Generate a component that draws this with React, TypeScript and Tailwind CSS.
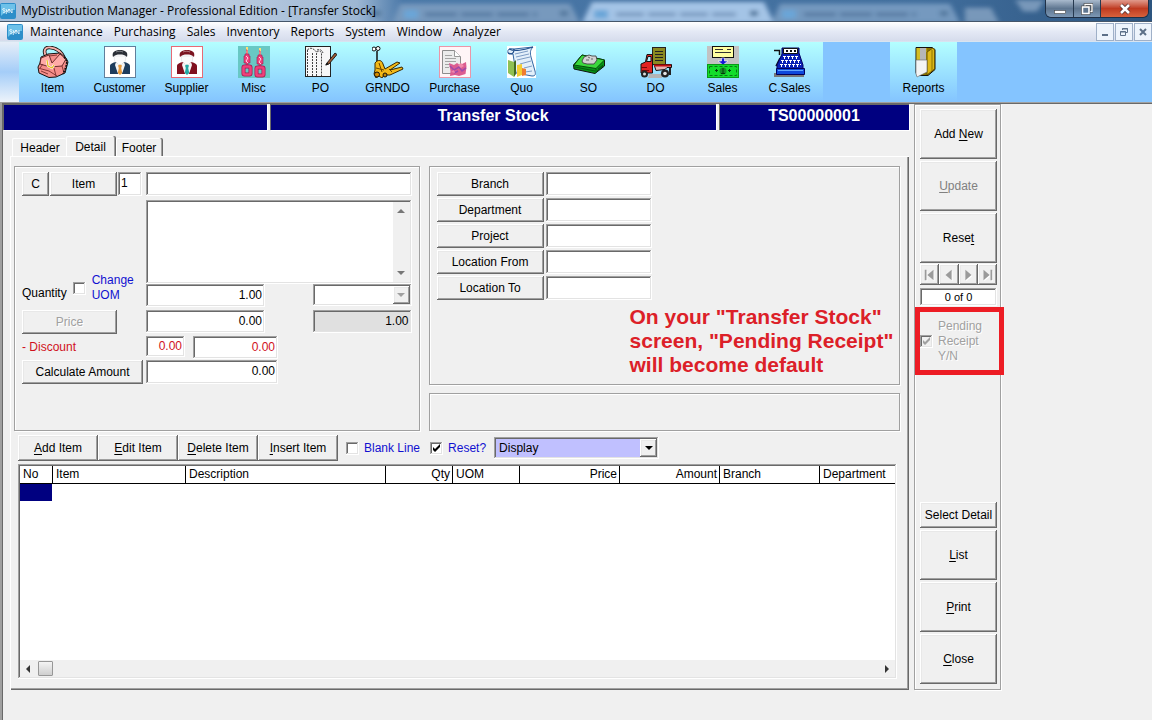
import { useState } from "react";
import type { ReactNode } from "react";
import clsx from "clsx";

const raised =
  "bg-[#f0f0f0] shadow-[inset_-1px_-1px_#696969,inset_1px_1px_#ffffff,inset_-2px_-2px_#a0a0a0,inset_2px_2px_#e8e8e8]";
const sunken =
  "shadow-[inset_-1px_-1px_#ffffff,inset_1px_1px_#a0a0a0,inset_-2px_-2px_#e3e3e3,inset_2px_2px_#696969]";
const etched = "border border-[#a0a0a0] shadow-[1px_1px_#ffffff,inset_1px_1px_#ffffff]";
const disabledText = "text-[#a0a0a0] [text-shadow:1px_1px_#ffffff]";

type ToolItem = { label: string; icon: ReactNode };

const menus = ["Maintenance", "Purchasing", "Sales", "Inventory", "Reports", "System", "Window", "Analyzer"];

function PersonIcon({ frame, hair, suit, tie }: { frame: string; hair: string; suit: string; tie: string }) {
  return (
    <>
      <rect x="0.5" y="0.5" width="31" height="31" fill="#fff" stroke={frame} />
      <path d="M10.500 10h11c1 6-2 9-5.500 9s-6.500-3-5.500-9Z" fill="#fbfbfb" stroke="#d8d8de" strokeWidth="0.6" />
      <path d="M9 11C7.500 6 11 4 16 4s8.500 2 7 7c-2-2-4-2.500-7-2.500S11 9 9 11Z" fill={hair} />
      <path d="M12 6c2-1 5-1 7 0" stroke="#fff" strokeOpacity="0.4" fill="none" />
      <path d="M6 28V20c0-2 3-3.500 6-4l4 5 4-5c3 .5 6 2 6 4v8Z" fill={suit} />
      <path d="m12 16 4 4 4-4 1 3-3 9h-4l-3-9Z" fill="#f4f4f4" />
      <path d="m9 18 5 10H8ZM23 18l-5 10h6Z" fill={suit} />
      <path d="m14 19.500 2-1 2 1-.8 2.500 1 5-2.200 2-2.200-2 1-5Z" fill={tie} />
    </>
  );
}

function Candle({ x }: { x: number }) {
  return (
    <>
      <path d={`M${x + 5} 1v9`} stroke="#ffe070" strokeWidth="2" />
      <path d={`M${x + 4} 4h1v4h-1`} stroke="#d0308a" fill="none" />
      <path d={`M${x + 3} 8h4v2h1v7h-2v3h-2v-3h-2v-7h1Z`} fill="#f0407a" stroke="#a01850" strokeWidth="0.6" />
      <path d={`M${x + 4} 10l2 2-2 3 2 2`} stroke="#ffd0e0" fill="none" />
      <rect x={x + 1.5} y="20.500" width="7" height="8" rx="1" fill="none" stroke="#a01850" strokeWidth="4" />
      <rect x={x + 1.5} y="20.500" width="7" height="8" rx="1" fill="none" stroke="#f0407a" strokeWidth="2.600" />
    </>
  );
}

const tools: ToolItem[] = [
  {
    label: "Item",
    icon: (
      <>
        <path d="M9 10C6 5 8 1 13 1.500c6 .5 11 4 14 10" fill="none" stroke="#111" strokeWidth="3.600" />
        <path d="M9 10C6 5 8 1 13 1.500c6 .5 11 4 14 10" fill="none" stroke="#f8b0aa" strokeWidth="1.800" />
        <path d="m4 11 7-3 12-1 6 5 2 4-3 11-9 4-7 0.500L2 27l-1-6 2-4Z" fill="#f58e8a" stroke="#111" />
        <path d="m4 12 8-3 3 8 8-9 6 5-4 7-12 1L3 18Z" fill="#ffaaa6" stroke="#5c2020" strokeWidth="0.9" />
        <path d="m1 22 11 3 8 5M17 22l2 8M25 20l2 7M6 18l-3 4M4 25l7 3M12 10l8-1" stroke="#7c2c2c" fill="none" strokeWidth="0.9" />
        <path d="m10 14 1 6 4 2 2-3" stroke="#fff" strokeWidth="2.400" fill="none" />
        <path d="m10 14 1 6 4 2 2-3" stroke="#e8c020" strokeWidth="1.300" fill="none" />
        <path d="m27 11 3 4-1 6-3 7" stroke="#111" fill="none" strokeWidth="1.600" strokeDasharray="2 1" />
      </>
    ),
  },
  { label: "Customer", icon: <PersonIcon frame="#5f7f9c" hair="#2a2e36" suit="#1d3c5c" tie="#e59a3c" /> },
  { label: "Supplier", icon: <PersonIcon frame="#e76a75" hair="#7b1420" suit="#80101f" tie="#23aaa5" /> },
  {
    label: "Misc",
    icon: (
      <>
        <rect width="32" height="32" fill="#68c8c4" />
        <Candle x={4} />
        <g transform="translate(0 1)">
          <Candle x={17} />
        </g>
      </>
    ),
  },
  {
    label: "PO",
    icon: (
      <>
        <rect x="0.5" y="0.5" width="25" height="30" fill="#f7f7f7" stroke="#222" />
        <path
          d="M2.500 4v26M7.500 7v23M11.500 30V8c0-4 5-4 5 0v22M2.500 4c2-3 6-2 9 2M12 4c3-1 5 0 6 3"
          fill="none"
          stroke="#444"
          strokeDasharray="2 1"
        />
        <path d="m22 17 8-10 2 1.500-8 9.500-3 1Z" fill="#9d5a33" stroke="#111" strokeWidth="0.9" />
        <path d="m20 19.500 2-3 1.500 1.500Z" fill="#111" />
      </>
    ),
  },
  {
    label: "GRNDO",
    icon: (
      <>
        <path d="M5 5v16M5 5v12l3 4" stroke="#111" strokeWidth="1.500" fill="none" />
        <circle cx="2" cy="3" r="2" fill="#fff" stroke="#111" />
        <circle cx="6" cy="2.500" r="2" fill="#fff" stroke="#111" />
        <path
          d="M3 17c3-4 7-3 8 1l2 5 12-7 3 1-10 7 12-3 1 2-13 6-6 0-2 3-3-2-3 2-2-4 1-4Z"
          fill="#f3b918"
          stroke="#3a2800"
        />
        <path d="m7 17 3 9M4 22l8 2M17 23l3 3" stroke="#6a4500" fill="none" />
        <circle cx="5" cy="28.500" r="2.500" fill="#d38b00" stroke="#111" />
        <circle cx="13" cy="29" r="2" fill="#c68600" stroke="#111" />
      </>
    ),
  },
  {
    label: "Purchase",
    icon: (
      <>
        <rect x="0.5" y="0.5" width="31" height="31" fill="#fff5f7" stroke="#eb96a8" />
        <path d="M3.500 4.500h12l6 6v17h-18Z" fill="#ececec" stroke="#8c8c8c" />
        <path d="M15.500 4.500v6h6" fill="#fff" stroke="#999" />
        <path d="M6 9.500h7M6 12.500h11M6 15.500h11M6 18.500h5M6 21.500h4" stroke="#a4a4a4" />
        <path d="m10 17 5 2 3-2 3 2 6-3 .5 5-1 7-6.500 2-4-1-5 1 .5-5Z" fill="#dc5c90" />
        <path d="m11 20 4 4 5-3 3 4 4-3M15 27l4-2" stroke="#a04aa8" strokeWidth="1.600" fill="none" />
        <path d="m19 19 3-2 3 3-3 2ZM12 26l3-2 1 3Z" fill="#f08aac" />
      </>
    ),
  },
  {
    label: "Quo",
    icon: (
      <>
        <rect x="1" width="29" height="32" fill="#fff" />
        <path
          d="M2 7C1 3 4 2 8 3l19-2c-3 3-3 6-2 10l4 14c1 4 0 5-3 5l-16-3L7 8Z"
          fill="#e3effa"
          stroke="#3366a2"
        />
        <path d="M2 7c3 2 6 1 6-4M3 3c6 3 14 1 24-2" stroke="#24508c" strokeWidth="1.200" fill="none" />
        <path d="m9 8 13-3M10 11l13-3M11 14l13-3M14 18l11-3M18 22l8-2M19 26l7-1" stroke="#7d9cc4" fill="none" />
        <path d="m2 14 6 2v15l-6-4Z" fill="#8fc052" />
        <path d="m8 16 2-2v14l-2 3Z" fill="#426b20" />
        <path d="m11 19 5-1v11l-5 2Z" fill="#f4ce32" />
        <path d="m16 22 4 1v6l-4 1Z" fill="#ef7d2e" />
      </>
    ),
  },
  {
    label: "SO",
    icon: (
      <>
        <path d="M0.500 19 9 9l22.500 5v6L22 27.500 1 23Z" fill="#079417" stroke="#111" />
        <path d="M1 19 9 9l22.500 5L23 22.500Z" fill="#3cd83c" stroke="#064b0c" />
        <path d="M23 22.500v4.500M2 21l20 4M25 23l5-4M24 25l6-5" stroke="#055c0e" fill="none" />
        <path d="m9 15 2-4 5-2 3 1 4 0 1 4-3 4-4 0-3 0-4-1Z" fill="#d2d2d2" stroke="#444" strokeWidth="0.9" />
        <path d="M13 14h3M19 12v2M15 11l2 1" stroke="#666" />
      </>
    ),
  },
  {
    label: "DO",
    icon: (
      <>
        <path d="M9 28h13v4H8Z" fill="#b4b4b4" />
        <rect x="12.500" y="1.500" width="13" height="17" fill="#8a8a20" stroke="#222" />
        <path d="M15 5.500h8M15 8.500h8M15 11.500h8M15 14.500h8" stroke="#222" />
        <path d="M14 18.500h17.500v3H27l-2 2-9 1Z" fill="#e9b0b0" stroke="#111" />
        <path d="M14 19.500h17" stroke="#c01010" strokeWidth="2" />
        <path d="M5.500 16 7 8.500h5.500V27H1v-9Z" fill="#e12222" stroke="#111" />
        <path d="m6.500 15.500 1.500-5h3v5Z" fill="#b9f2ff" stroke="#111" />
        <path d="M1 21.500h6M2 24.500h7" stroke="#7a0505" />
        <circle cx="4.500" cy="28" r="3.500" fill="#222" />
        <circle cx="4.500" cy="28" r="1.500" fill="#ddd" />
        <circle cx="25" cy="27.500" r="4" fill="#222" />
        <circle cx="25" cy="27.500" r="1.800" fill="#e4e4e4" />
        <path d="M30 22v7" stroke="#222" strokeWidth="2" />
      </>
    ),
  },
  {
    label: "Sales",
    icon: (
      <>
        <rect width="32" height="32" fill="#c2c2c2" />
        <rect x="5.500" y="0.500" width="21" height="11" fill="#ffffa0" stroke="#111" />
        <path d="M8 3.500h8M20 3.500h4M8 6.500h16" stroke="#333" />
        <path d="M14.500 12h3v3h3.500l-5 4-5-4h3.500Z" fill="#1515d8" stroke="#fff" strokeWidth="0.6" />
        <rect x="0.500" y="18.500" width="31" height="13" fill="#13dd2b" stroke="#0a9a18" />
        <rect x="2.500" y="20.500" width="27" height="9" fill="none" stroke="#087714" strokeDasharray="3 2" />
        <circle cx="16" cy="25" r="3.500" fill="#159025" />
        <path d="M14 27.500h4M16 22v5M9.500 23v3M22.500 23v3M8 24.500h3M21 24.500h3" stroke="#043b0a" />
      </>
    ),
  },
  {
    label: "C.Sales",
    icon: (
      <>
        <path d="M0 27h30v4H0Z" fill="#777" />
        <path d="M0 4.500h5.500V9M6 12l-4 8" fill="none" stroke="#111" strokeWidth="1.500" />
        <path d="M8 2h17v5l4 12v8H3v-8L8 8Z" fill="#0a20b5" stroke="#000060" />
        <path d="M9.500 2.500h14v5h-14Z" fill="#fff" stroke="#111" />
        <path d="M12 5h2M16 5h2M20 5h2" stroke="#111" strokeWidth="2" />
        <path d="M9 10.500h16M7 14.500h19M6 18.500h21" stroke="#fff" strokeDasharray="3 1" />
        <path d="M10 12h15M8 16h18M7 20h20" stroke="#fff" strokeWidth="2" strokeDasharray="1 3" />
        <path d="M2.500 22.500h28v6h-28Z" fill="#0d48dc" stroke="#000060" />
        <path d="M4 24.500h25" stroke="#62a7ff" />
      </>
    ),
  },
];

const reportsTool: ToolItem = {
  label: "Reports",
  icon: (
    <>
      <path d="M8 1.500h16l3 2v20l-7 6-11 0-1-3Z" fill="#8c7400" stroke="#111" />
      <path d="M8.500 2h10v13h-10Z" fill="#d3bd23" />
      <path d="M12 2h6v13h-6Z" fill="#b6b6b6" />
      <path d="m19 6 6-4 1.500 2v19L19 29Z" fill="#ddb817" stroke="#6b5600" />
      <path d="M24 4v21" stroke="#8c7400" />
      <path d="M8 14h11v12l-10 5-1-3Z" fill="#f4f4f4" stroke="#666" strokeWidth="0.6" />
    </>
  ),
};

function AppLogo() {
  return (
    <svg viewBox="0 0 16 16" className="size-4 shrink-0" aria-hidden="true">
      <rect width="16" height="16" rx="2" fill="#2d8ec9" />
      <path d="M1 1h14v6C9 7 5 9 1 13Z" fill="#6dc1e9" />
      <path d="M5 6c-2-1-3 0-2 1l2 1c1 2-1 2-2 1M6 6l1 3 2-3M7 9l-1 2M9 10V6l3 4V6" stroke="#fff" fill="none" strokeWidth="0.8" />
    </svg>
  );
}

function ToolButton({ item }: { item: ToolItem }) {
  return (
    <button type="button" className="flex w-[67px] shrink-0 flex-col items-center bg-linear-to-b from-[#b4ffff] to-[#84c4ff] pt-1 text-center">
      <svg viewBox="0 0 32 32" className="size-8" aria-hidden="true">
        {item.icon}
      </svg>
      <span className="mt-[2px] leading-4">{item.label}</span>
    </button>
  );
}

function TitleBar() {
  return (
    <header className="relative flex h-[22px] items-center overflow-hidden border-b border-[#45566a] bg-[#47729f] font-['Open_Sans',sans-serif]">
      {/* glass: tabs of the window behind shine through */}
      <svg className="absolute inset-0 h-full w-full" viewBox="0 0 1152 22" preserveAspectRatio="none" aria-hidden="true">
        <defs>
          <filter id="glass" x="-5%" y="-50%" width="110%" height="200%">
            <feGaussianBlur stdDeviation="2.5" />
          </filter>
          <linearGradient id="sky" x1="0" x2="1">
            <stop offset="0" stopColor="#a7bfda" />
            <stop offset="0.2" stopColor="#b9cbe0" />
            <stop offset="0.31" stopColor="#9db7d3" />
            <stop offset="0.35" stopColor="#4a78a8" />
            <stop offset="0.8" stopColor="#416e9d" />
            <stop offset="1" stopColor="#2d557f" />
          </linearGradient>
        </defs>
        <rect width="1152" height="22" fill="url(#sky)" />
        <g filter="url(#glass)">
          <path d="M392 24 400 4h170l10 20Z" fill="#7799bd" />
          <path d="M582 24 592 2h172l10 22Z" fill="#a4c4e6" />
          <path d="M772 24 780 4h170l10 20Z" fill="#7599bf" />
          <path d="M965 24V8h26l8 16ZM1015 0h30l-8 12h-14Z" fill="#7898ba" />
          <path d="M425 15h112M804 15h112" stroke="#5b7fa6" strokeWidth="5" strokeDasharray="32 4" />
          <path d="M616 15h120" stroke="#7f9fc4" strokeWidth="5" strokeDasharray="28 4" />
          <path d="M372 14h9M560 14h8M750 14h8M940 14h8" stroke="#557a9f" strokeWidth="6" />
          <path d="M404 15h14M594 15h14M782 15h14" stroke="#6aa6d8" strokeWidth="9" />
        </g>
      </svg>
      <div className="relative flex min-w-0 flex-1 items-center gap-[5px]">
        <AppLogo />
        <h1 className="truncate text-[12px] text-black">MyDistribution Manager - Professional Edition - [Transfer Stock]</h1>
      </div>
      <div className="relative mr-[3px] flex h-[18px] self-start overflow-hidden rounded-b-md border border-t-0 border-[#1f3047]">
        <button type="button" aria-label="Minimize" className="grid w-[28px] place-items-center border-r border-[#26394f] bg-linear-to-b from-[#a9bacd] via-[#5f7690] to-[#7d98b5]">
          <svg viewBox="0 0 12 12" className="size-3" aria-hidden="true">
            <rect x="0.5" y="7.5" width="11" height="3" fill="#fff" stroke="#444" strokeWidth="0.6" />
          </svg>
        </button>
        <button type="button" aria-label="Restore" className="grid w-[27px] place-items-center border-r border-[#26394f] bg-linear-to-b from-[#a9bacd] via-[#5f7690] to-[#7d98b5]">
          <svg viewBox="0 0 12 12" className="size-3" aria-hidden="true">
            <path d="M4 1.500h7v7H4Z" fill="none" stroke="#333" strokeWidth="2.600" />
            <path d="M4 1.500h7v7H4Z" fill="none" stroke="#fff" strokeWidth="1.400" />
            <rect x="1.500" y="4" width="6.500" height="6.500" fill="#5f7690" stroke="#333" strokeWidth="2.600" />
            <rect x="1.500" y="4" width="6.500" height="6.500" fill="#5f7690" stroke="#fff" strokeWidth="1.600" />
          </svg>
        </button>
        <button type="button" aria-label="Close window" className="grid w-[47px] place-items-center bg-linear-to-b from-[#e09a8c] via-[#bf3a20] to-[#d8623c]">
          <svg viewBox="0 0 12 12" className="size-3" aria-hidden="true">
            <path d="m2 2 8 8M10 2l-8 8" stroke="#4a2a2a" strokeWidth="4" />
            <path d="m2 2 8 8M10 2l-8 8" stroke="#fff" strokeWidth="2.600" />
          </svg>
        </button>
      </div>
    </header>
  );
}

function MenuBar() {
  const box = "grid size-[18px] place-items-center border border-[#9fb0c8] bg-[#eef4fc]";
  return (
    <nav className="flex h-[19px] items-center justify-between bg-linear-to-b from-white via-[#e4e9f5] to-[#d6dcec] pl-[7px] font-['Open_Sans',sans-serif]">
      <div className="flex items-center gap-[7px]">
        <AppLogo />
        <ul className="flex gap-[11px] text-[12px] leading-[18px]">
          {menus.map((menu) => (
            <li key={menu}>
              <button type="button">{menu}</button>
            </li>
          ))}
        </ul>
      </div>
      <div className="flex gap-px">
        <button type="button" aria-label="Minimize form" className={box}>
          <svg viewBox="0 0 10 10" className="size-[10px]" aria-hidden="true">
            <path d="M2 8h6" stroke="#5d7088" strokeWidth="2" />
          </svg>
        </button>
        <button type="button" aria-label="Restore form" className={box}>
          <svg viewBox="0 0 10 10" className="size-[10px]" aria-hidden="true">
            <path d="M3.500 3V1.500h5v4H7M3 2h6" stroke="#5d7088" fill="none" />
            <path d="M1.500 4.500h5v4h-5ZM1 5h6" stroke="#5d7088" fill="none" />
          </svg>
        </button>
        <button type="button" aria-label="Close form" className={box}>
          <svg viewBox="0 0 10 10" className="size-[10px]" aria-hidden="true">
            <path d="m2 2 6 6M8 2 2 8" stroke="#5d7088" strokeWidth="2" />
          </svg>
        </button>
      </div>
    </nav>
  );
}

function Toolbar() {
  return (
    <div className="flex h-[61px] overflow-hidden border-t border-[#d8e4f0] bg-[#84c4ff]">
      <div className="w-[19px] shrink-0 bg-linear-to-b from-[#e6eef8] via-[#a4cdf8] to-[#edf3fa]" />
      {tools.map((item) => (
        <ToolButton key={item.label} item={item} />
      ))}
      <div className="w-[67px] shrink-0" />
      <ToolButton item={reportsTool} />
    </div>
  );
}

function Key({ text, letter }: { text: string; letter: string }) {
  const at = text.indexOf(letter);
  return (
    <span>
      {text.slice(0, at)}
      <u className="underline-offset-2">{letter}</u>
      {text.slice(at + 1)}
    </span>
  );
}

function PushButton({ children, className, disabled }: { children: ReactNode; className?: string; disabled?: boolean }) {
  return (
    <button type="button" disabled={disabled} className={clsx("text-center", raised, className)}>
      {children}
    </button>
  );
}

function Field({ label, value = "", className, right }: { label: string; value?: string; className?: string; right?: boolean }) {
  const [text, setText] = useState(value);
  return (
    <input
      aria-label={label}
      value={text}
      onChange={(e) => setText(e.target.value)}
      className={clsx("min-w-0 px-[3px] pb-[2px] outline-none", sunken, right && "text-right", className)}
    />
  );
}

function CheckBox({ id, initial = false, disabled }: { id: string; initial?: boolean; disabled?: boolean }) {
  const [on, setOn] = useState(initial);
  return (
    <span className="grid size-[13px] shrink-0">
      <input
        id={id}
        type="checkbox"
        checked={on}
        disabled={disabled}
        onChange={() => setOn(!on)}
        className={clsx("col-start-1 row-start-1 size-[13px] appearance-none", sunken, disabled ? "bg-[#f0f0f0]" : "bg-white")}
      />
      {on && (
        <svg viewBox="0 0 13 13" className="pointer-events-none col-start-1 row-start-1 size-[13px]" aria-hidden="true">
          <path d="M3 5v3l2 2 5-5V2L5 7Z" fill={disabled ? "#a0a0a0" : "#000"} />
        </svg>
      )}
    </span>
  );
}

function Arrow({ d, color = "#777" }: { d: string; color?: string }) {
  return (
    <svg viewBox="0 0 8 8" className="size-2" aria-hidden="true">
      <path d={d} fill={color} />
    </svg>
  );
}

const down = "M0 2h8L4 6Z";
const up = "M0 6h8L4 2Z";

function DropDown({ label, options, disabled, className }: { label: string; options: string[]; disabled?: boolean; className?: string }) {
  return (
    <div className={clsx("grid grid-cols-[1fr_17px] p-[2px]", sunken, className)}>
      <select
        aria-label={label}
        disabled={disabled}
        className="col-span-2 col-start-1 row-start-1 min-w-0 appearance-none pl-[3px] opacity-100 outline-none"
      >
        {options.map((option) => (
          <option key={option}>{option}</option>
        ))}
      </select>
      <span className={clsx("pointer-events-none col-start-2 row-start-1 grid place-items-center", raised)}>
        <Arrow d={down} color={disabled ? "#a0a0a0" : "#000"} />
      </span>
    </div>
  );
}

function ItemEntry() {
  return (
    <section className={clsx("flex pt-[5px] pr-[7px] pb-[46px] pl-[7px]", etched)}>
      <div className="flex w-[124px] shrink-0 flex-col items-start">
        <div className="flex gap-px">
          <PushButton className="h-[24px] w-[27px]">C</PushButton>
          <PushButton className="h-[24px] w-[67px]">Item</PushButton>
          <Field label="Line number" value="1" className="h-[24px] w-[24px] bg-white" />
        </div>
        <div className="mt-[77px] flex h-[30px] items-center gap-[6px]">
          <span className="mt-[10px] leading-4">Quantity</span>
          <CheckBox id="change-uom" />
          <label htmlFor="change-uom" className="w-[46px] leading-[15px] text-[#1010d0]">
            Change UOM
          </label>
        </div>
        <PushButton disabled className={clsx("mt-[7px] h-[24px] w-[95px]", disabledText)}>
          Price
        </PushButton>
        <span className="h-[26px] leading-[26px] text-[#d0101c]">- Discount</span>
        <PushButton className="h-[24px] w-[121px]">Calculate Amount</PushButton>
      </div>
      <div className="flex min-w-0 flex-1 flex-col">
        <Field label="Item name" className="h-[24px] bg-white" />
        <div className={clsx("mt-[4px] flex h-[84px] bg-white p-[2px]", sunken)}>
          <textarea aria-label="Item description" className="min-w-0 flex-1 resize-none overflow-hidden px-1 outline-none" />
          <div className="flex w-[17px] flex-col items-center justify-between bg-[#f0f0f0] py-[5px]">
            <Arrow d={up} />
            <Arrow d={down} />
          </div>
        </div>
        <div className="flex justify-between">
          <Field label="Quantity" value="1.00" right className="h-[23px] w-[119px] bg-white" />
          <DropDown label="Unit of measure" options={[""]} disabled className="h-[22px] w-[99px] bg-white" />
        </div>
        <div className="mt-[3px] flex justify-between">
          <Field label="Price" value="0.00" right className="h-[23px] w-[119px] bg-white" />
          <Field label="Rate" value="1.00" right className="h-[23px] w-[99px] bg-[#e0e0e0]" />
        </div>
        <div className="mt-[3px] flex items-start gap-[8px] text-[#d0101c]">
          <Field label="Discount percent" value="0.00" right className="h-[21px] w-[39px] bg-white" />
          <Field label="Discount" value="0.00" right className="h-[23px] w-[85px] bg-white" />
        </div>
        <Field label="Amount" value="0.00" right className="mt-px h-[24px] w-[132px] bg-white" />
      </div>
    </section>
  );
}

function LocationEntry() {
  return (
    <div className="flex min-w-0 flex-col gap-[8px]">
      <section className={clsx("flex flex-col gap-[2px] pt-[5px] pb-[7px] pl-[7px]", etched)}>
        {["Branch", "Department", "Project", "Location From", "Location To"].map((name) => (
          <div key={name} className="flex gap-[2px]">
            <PushButton className="h-[24px] w-[107px]">{name}</PushButton>
            <Field label={name} className="h-[24px] w-[106px] bg-white" />
          </div>
        ))}
        <p className="mt-[3px] ml-[193px] text-[21px] leading-[24px] font-bold whitespace-nowrap text-[#dc2028]">
          On your &quot;Transfer Stock&quot;
          <br />
          screen, &quot;Pending Receipt&quot;
          <br />
          will become default
        </p>
      </section>
      <div className={clsx("h-[38px]", etched)} />
    </div>
  );
}

const columns = [
  { name: "No", width: "w-[33px]" },
  { name: "Item", width: "w-[133px]" },
  { name: "Description", width: "w-[200px]" },
  { name: "Qty", width: "w-[67px]", right: true },
  { name: "UOM", width: "w-[67px]" },
  { name: "Price", width: "w-[100px]", right: true },
  { name: "Amount", width: "w-[100px]", right: true },
  { name: "Branch", width: "w-[100px]" },
  { name: "Department", width: "" },
];

function DetailGrid() {
  return (
    <div className={clsx("flex flex-col bg-white p-[2px]", sunken)}>
      <div className="min-h-[194px] overflow-hidden">
        <table className="w-full table-fixed border-separate border-spacing-0">
          <thead>
            <tr className="h-[18px]">
              {columns.map((column, i) => (
                <th
                  key={column.name}
                  className={clsx(
                    "border-b border-black px-[3px] leading-[17px] font-normal",
                    i < columns.length - 1 && "border-r",
                    column.right ? "pr-[2px] text-right" : "text-left",
                    column.width,
                  )}
                >
                  {column.name}
                </th>
              ))}
            </tr>
          </thead>
          <tbody>
            <tr className="h-[17px]">
              {columns.map((column, i) => (
                <td key={column.name} className={clsx(i === 0 && "border-r border-white bg-[#000080]")} />
              ))}
            </tr>
          </tbody>
        </table>
      </div>
      <div className="flex h-[17px] items-center bg-[#f0f0f0] px-[4px]">
        <Arrow d="M6 0v8L2 4Z" color="#333" />
        <button type="button" aria-label="Scroll thumb" className="ml-[6px] h-[15px] w-[15px] rounded-[1px] border border-[#979797] bg-linear-to-b from-[#f4f4f4] to-[#cfcfcf]" />
        <span className="flex-1" />
        <Arrow d="M2 0v8l4-4Z" color="#333" />
      </div>
    </div>
  );
}

function DetailForm() {
  const tab = "border-t border-l border-white shadow-[1px_0_#a0a0a0,2px_0_#696969] rounded-t-[2px]";
  const strip = "flex h-[26px] items-start justify-center bg-[#000080] leading-[24px] shadow-[inset_1px_1px_#696969,1px_1px_#ffffff]";
  return (
    <main className="min-w-0 flex-1">
      <div className="flex gap-[3px] text-[16px] font-bold text-white">
        <div className={clsx(strip, "w-[264px]")} />
        <h2 className={clsx(strip, "flex-1")}>Transfer Stock</h2>
        <div className={clsx(strip, "w-[190px]")}>TS00000001</div>
      </div>
      <div className="mt-[6px] flex items-end pl-[9px]" role="tablist">
        <button type="button" role="tab" className="h-[18px] w-[54px] rounded-t-[2px] border-t border-l border-white pl-px">
          Header
        </button>
        <button type="button" role="tab" aria-selected="true" className={clsx("h-[20px] w-[48px]", tab)}>
          Detail
        </button>
        <button type="button" role="tab" className={clsx("ml-[2px] h-[18px] w-[45px]", tab)}>
          Footer
        </button>
      </div>
      <div className="ml-[7px] border-t border-l border-white pt-[9px] pr-[9px] pb-[11px] pl-[3px] shadow-[inset_-1px_-1px_#696969,inset_-2px_-2px_#a0a0a0]">
        <div className="grid grid-cols-[406fr_472fr] gap-[9px]">
          <ItemEntry />
          <LocationEntry />
        </div>
        <div className="mt-[4px] mr-[3px] ml-[4px]">
          <div className="flex items-center">
            <PushButton className="h-[26px] w-[80px]">
              <Key text="Add Item" letter="A" />
            </PushButton>
            <PushButton className="h-[26px] w-[80px]">
              <Key text="Edit Item" letter="E" />
            </PushButton>
            <PushButton className="h-[26px] w-[80px]">
              <Key text="Delete Item" letter="D" />
            </PushButton>
            <PushButton className="h-[26px] w-[80px]">
              <Key text="Insert Item" letter="I" />
            </PushButton>
            <div className="ml-[8px] flex items-center gap-[5px] text-[#1010d0]">
              <CheckBox id="blank-line" />
              <label htmlFor="blank-line" className="mr-[5px]">
                Blank Line
              </label>
              <CheckBox id="reset-line" initial />
              <label htmlFor="reset-line">Reset?</label>
            </div>
            <DropDown label="Display" options={["Display"]} className="ml-[8px] h-[22px] w-[165px] bg-[#c0c0ff]" />
          </div>
          <div className="mt-[3px]">
            <DetailGrid />
          </div>
        </div>
      </div>
    </main>
  );
}

const steps = [
  { label: "First record", d: "M2 2h2v12H2ZM12 2v12L5 8Z" },
  { label: "Previous record", d: "M11 2v12L4 8Z" },
  { label: "Next record", d: "M5 2v12l7-6Z" },
  { label: "Last record", d: "M12 2h2v12h-2ZM4 2v12l7-6Z" },
];

function SidePanel() {
  const tall = "h-[50px] w-full";
  return (
    <aside className={clsx("flex w-[87px] shrink-0 flex-col pt-[4px] pr-[3px] pb-[5px] pl-[5px]", etched)}>
      <div className="flex flex-col gap-[2px]">
        <PushButton className={tall}>
          <Key text="Add New" letter="N" />
        </PushButton>
        <PushButton disabled className={clsx(tall, "text-[#808080]")}>
          <Key text="Update" letter="U" />
        </PushButton>
        <PushButton className={tall}>
          <Key text="Reset" letter="t" />
        </PushButton>
      </div>
      <div className="mt-px grid grid-cols-4">
        {steps.map((step) => (
          <button key={step.label} type="button" disabled aria-label={step.label} className={clsx("grid h-[21px] place-items-center", raised)}>
            <svg viewBox="0 0 16 16" className="size-[14px]" aria-hidden="true">
              <path d={step.d} fill="#fff" transform="translate(1 1)" />
              <path d={step.d} fill="#9a9a9a" />
            </svg>
          </button>
        ))}
      </div>
      <output className={clsx("mt-[3px] h-[18px] bg-white text-center text-[11px] leading-[18px]", sunken)}>0 of 0</output>
      <div className="relative mt-[2px] flex h-[66px] items-center gap-[5px]">
        <CheckBox id="pending" initial disabled />
        <label htmlFor="pending" className={clsx("w-[50px] leading-[15px]", disabledText)}>
          Pending Receipt Y/N
        </label>
        <div className="pointer-events-none absolute -inset-y-px -right-[7px] -left-[5px] border-5 border-[#ed1c24]" />
      </div>
      <div className="mt-auto flex flex-col gap-[2px]">
        <PushButton className="h-[26px] w-full whitespace-nowrap">Select Detail</PushButton>
        <PushButton className={tall}>
          <Key text="List" letter="L" />
        </PushButton>
        <PushButton className={tall}>
          <Key text="Print" letter="P" />
        </PushButton>
        <PushButton className={tall}>
          <Key text="Close" letter="C" />
        </PushButton>
      </div>
    </aside>
  );
}

export default function App() {
  return (
    <div className="flex min-h-screen flex-col bg-[#f0f0f0] font-['Liberation_Sans',Arial,sans-serif] text-[12px] text-black">
      <TitleBar />
      <MenuBar />
      <Toolbar />
      <div className="flex-1 pt-[2px] pl-[3px] shadow-[inset_2px_1px_#a0a0a0,inset_3px_2px_#696969]">
        <div className="flex w-full max-w-[998px] items-stretch gap-[5px]">
          <DetailForm />
          <SidePanel />
        </div>
      </div>
    </div>
  );
}
